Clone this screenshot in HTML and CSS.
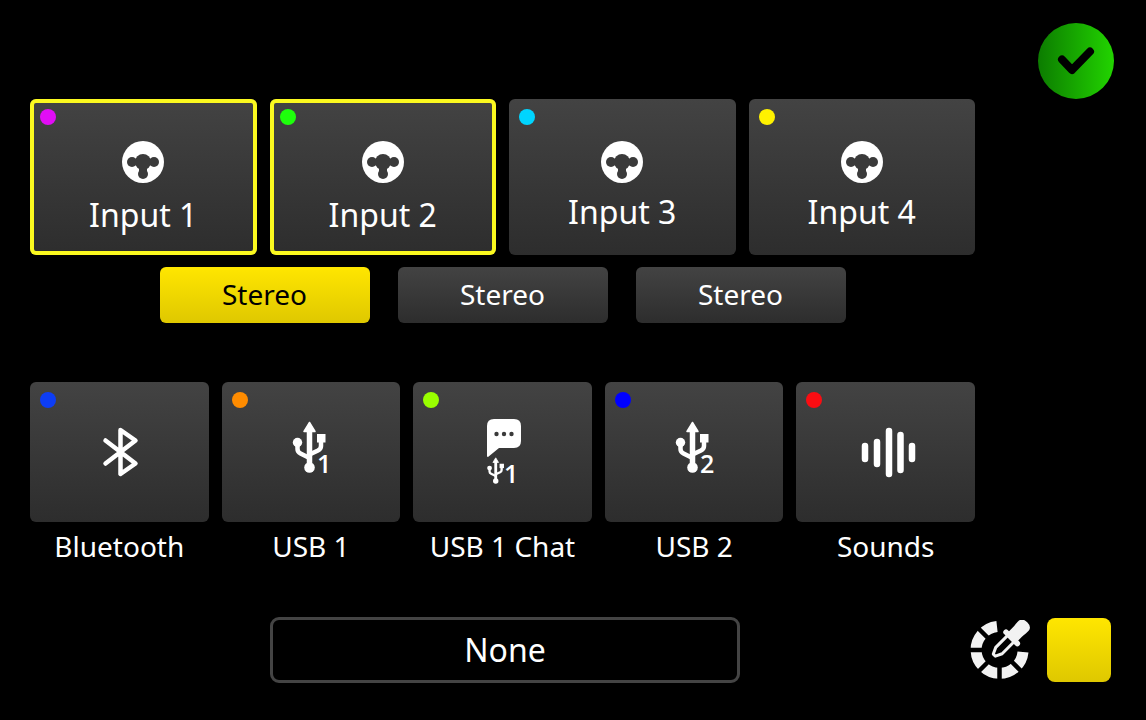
FILE: index.html
```html
<!DOCTYPE html>
<html lang="en">
<head>
    <meta charset="UTF-8">
    <meta name="viewport" content="width=device-width, initial-scale=1.0">
    <title>Select Input</title>
    <link rel="stylesheet" href="styles.css">
</head>
<body>

    <!-- Shared icon shapes -->
    <svg class="sprite" aria-hidden="true">
        <symbol id="combo-jack" viewBox="0 0 44 44">
            <circle cx="22" cy="22" r="21" fill="#fff"/>
            <g fill="#3a3a3a">
                <circle cx="22" cy="22" r="8"/>
                <circle cx="11" cy="22" r="5"/>
                <circle cx="33" cy="22" r="5"/>
                <circle cx="22" cy="34" r="5"/>
                <rect x="11" y="19" width="22" height="6"/>
                <rect x="18" y="24" width="8" height="10"/>
            </g>
        </symbol>
        <symbol id="usb" viewBox="0 0 60 70">
            <g fill="none" stroke="#fff" stroke-linejoin="round">
                <path d="M28.500 13V50" stroke-width="5.500"/>
                <path d="M16.500 26V32Q16.500 35 19.500 36.500L28.500 41M40 24V29Q40 32 37 33.500L28.500 37.500" stroke-width="4.500"/>
            </g>
            <path d="M28.500 5.500L34 14.500H23Z" fill="#fff" stroke="#fff" stroke-width="1.500" stroke-linejoin="round"/>
            <circle cx="28.500" cy="50.500" r="5.300" fill="#fff"/>
            <circle cx="16.500" cy="25.500" r="4.700" fill="#fff"/>
            <rect x="36" y="17" width="8.500" height="8.500" fill="#fff"/>
        </symbol>
    </svg>

    <header class="topbar">
        <button class="confirm" aria-label="Confirm">
            <svg viewBox="0 0 76 76"><path d="M24 36.500L34 47L52 28.500" fill="none" stroke="#000" stroke-width="8" stroke-linecap="round" stroke-linejoin="round"/></svg>
        </button>
    </header>

    <main class="sources">
        <!-- Analog inputs -->
        <div class="inputs">
            <button class="card selected" aria-pressed="true">
                <span class="dot magenta"></span>
                <svg class="jack"><use href="#combo-jack"/></svg>
                <span class="name">Input 1</span>
            </button>
            <button class="card selected" aria-pressed="true">
                <span class="dot green"></span>
                <svg class="jack"><use href="#combo-jack"/></svg>
                <span class="name">Input 2</span>
            </button>
            <button class="card">
                <span class="dot cyan"></span>
                <svg class="jack"><use href="#combo-jack"/></svg>
                <span class="name">Input 3</span>
            </button>
            <button class="card">
                <span class="dot yellow"></span>
                <svg class="jack"><use href="#combo-jack"/></svg>
                <span class="name">Input 4</span>
            </button>
        </div>

        <!-- Stereo links -->
        <div class="links">
            <button class="stereo active" aria-pressed="true">Stereo</button>
            <button class="stereo">Stereo</button>
            <button class="stereo">Stereo</button>
        </div>

        <!-- Digital sources -->
        <div class="digital">
            <div class="source">
                <button class="card" aria-labelledby="lblBluetooth">
                    <span class="dot blue"></span>
                    <svg class="icon" viewBox="0 0 60 70">
                        <path d="M16.500 23.500L46.500 46.500L31.500 57V13L46.500 23.500L16.500 46.500" fill="none" stroke="#fff" stroke-width="4.500" stroke-linecap="round" stroke-linejoin="round"/>
                    </svg>
                </button>
                <span class="caption" id="lblBluetooth">Bluetooth</span>
            </div>
            <div class="source">
                <button class="card" aria-labelledby="lblUsb1">
                    <span class="dot orange"></span>
                    <svg class="icon" viewBox="0 0 60 70">
                        <use href="#usb"/>
                        <text class="digit" x="36" y="56">1</text>
                    </svg>
                </button>
                <span class="caption" id="lblUsb1">USB 1</span>
            </div>
            <div class="source">
                <button class="card" aria-labelledby="lblChat">
                    <span class="dot lime"></span>
                    <svg class="icon" viewBox="0 0 60 70">
                        <path d="M22 2H42Q49 2 49 9V24Q49 31 42 31H27L16 40Q15 40 15 39V9Q15 2 22 2Z" fill="#fff"/>
                        <g fill="#3a3a3a">
                            <circle cx="24.500" cy="17" r="2.200"/>
                            <circle cx="32" cy="17" r="2.200"/>
                            <circle cx="39.500" cy="17" r="2.200"/>
                        </g>
                        <use href="#usb" x="9" y="38" width="31" height="36"/>
                        <text class="digit" x="32" y="66">1</text>
                    </svg>
                </button>
                <span class="caption" id="lblChat">USB 1 Chat</span>
            </div>
            <div class="source">
                <button class="card" aria-labelledby="lblUsb2">
                    <span class="dot navy"></span>
                    <svg class="icon" viewBox="0 0 60 70">
                        <use href="#usb"/>
                        <text class="digit" x="36" y="56">2</text>
                    </svg>
                </button>
                <span class="caption" id="lblUsb2">USB 2</span>
            </div>
            <div class="source">
                <button class="card" aria-labelledby="lblSounds">
                    <span class="dot red"></span>
                    <svg class="icon" viewBox="0 0 60 70">
                        <path d="M9 29V42M21 25V47M33 14V57M44.500 18V53M56 29V42" fill="none" stroke="#fff" stroke-width="6.500" stroke-linecap="round"/>
                    </svg>
                </button>
                <span class="caption" id="lblSounds">Sounds</span>
            </div>
        </div>
    </main>

    <footer class="bottombar">
        <button class="none">None</button>
        <div class="colors">
            <button class="picker" aria-label="Pick color">
                <svg viewBox="0 0 60 60">
                    <path d="M27 6.500A23.500 23.500 0 1 0 53 32" fill="none" stroke="#f2f2f2" stroke-width="11"/>
                    <path d="M0 30H14M29.500 46V60M8 8L20 20M8 52L20 40M52 52L40 40" stroke="#000" stroke-width="4.500"/>
                    <g transform="translate(24 35.500) rotate(45)">
                        <path d="M-4.500 -26V-7L-1.500 -.5H1.500L4.500 -7V-26" fill="#000" stroke="#f2f2f2" stroke-width="3" stroke-linejoin="round"/>
                        <path d="M-6.500 -25V-33Q-6.500 -35 -7 -38V-42Q-6.500 -47 0 -47Q6.500 -47 7 -42V-38Q6.500 -35 6.500 -33V-25Z" fill="#f2f2f2"/>
                        <path d="M-8 -25H8" stroke="#f2f2f2" stroke-width="5.500" stroke-linecap="round"/>
                    </g>
                </svg>
            </button>
            <button class="swatch" aria-label="Current color"></button>
        </div>
    </footer>

</body>
</html>
```
FILE: styles.css
```css
* { box-sizing: border-box; }
body { margin: 0; background: #000; color: #fff; font-family: "Noto Sans", sans-serif; }
button { border: none; padding: 0; background: none; color: inherit; font-family: inherit; cursor: pointer; }
svg { display: block; }
.sprite { display: none; }

/* Top bar */
.topbar { display: flex; justify-content: flex-end; padding: 23px 32px 0 30px; }
.confirm { width: 76px; height: 76px; border-radius: 50%; background: linear-gradient(90deg, #0c7c00, #22d400); }

/* Source cards */
.sources { margin: 0 171px 0 30px; }
.card {
    position: relative;
    display: flex;
    flex-direction: column;
    align-items: center;
    justify-content: center;
    width: 100%;
    border-radius: 6px;
    background: linear-gradient(#434343, #2d2d2d);
}
.inputs { display: grid; grid-template-columns: repeat(4, 1fr); gap: 13px; }
.inputs .card { height: 156px; justify-content: flex-start; padding-top: 41px; }
.card.selected { box-shadow: inset 0 0 0 4px #fbf91f; }
.jack { width: 44px; height: 44px; }
.name { margin-top: 8px; font-size: 32px; line-height: 40px; }
.selected .name { margin-top: 11px; }

.dot { position: absolute; top: 10px; left: 10px; width: 16px; height: 16px; border-radius: 50%; }
.magenta { background: #e10df5; }
.green { background: #1eff0c; }
.cyan { background: #00d5ff; }
.yellow { background: #fff200; }
.blue { background: #0d3df5; }
.orange { background: #ff8c00; }
.lime { background: #99ff00; }
.navy { background: #0000ff; }
.red { background: #fa0d12; }

.links { display: flex; justify-content: center; gap: 28px; margin-top: 12px; }
.stereo { width: 210px; height: 56px; padding-bottom: 2px; border-radius: 6px; background: linear-gradient(#434343, #2d2d2d); font-size: 28px; line-height: 40px; }
.stereo.active { background: linear-gradient(#ffe600, #dfc800); color: #000; }

.digital { display: grid; grid-template-columns: repeat(5, 1fr); gap: 13px; margin-top: 59px; }
.digital .card { height: 140px; }
.icon { width: 60px; height: 70px; overflow: visible; }
.digit { fill: #fff; font-family: "Open Sans", sans-serif; font-size: 25px; font-weight: 600; }
.caption { display: block; margin-top: 4px; text-align: center; font-size: 28px; line-height: 40px; }

/* Bottom bar */
.bottombar { display: grid; grid-template-columns: 1fr 371px; align-items: center; margin: 51px 35px 0 270px; }
.none { height: 66px; border: 3px solid #444; border-radius: 9px; font-size: 32px; line-height: 40px; }
.colors { display: flex; justify-content: flex-end; align-items: center; gap: 17px; }
.picker { width: 60px; height: 60px; }
.swatch { width: 64px; height: 64px; border-radius: 8px; background: linear-gradient(#ffe600, #dfc800); }
```
